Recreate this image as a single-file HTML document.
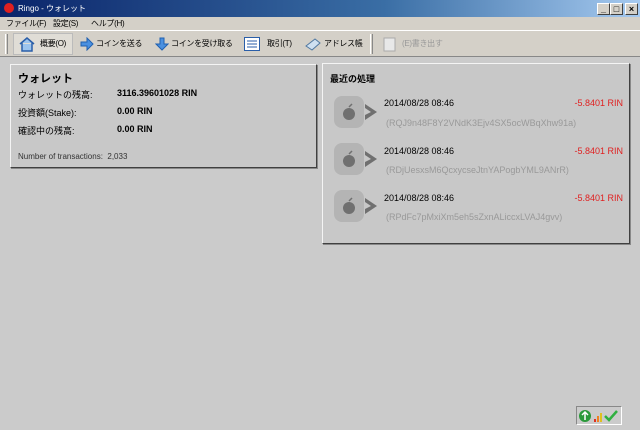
<!DOCTYPE html>
<html><head><meta charset="utf-8"><style>
*{margin:0;padding:0;box-sizing:border-box}
body{width:640px;height:430px;background:#cbcbcb;font-family:"Liberation Sans","Noto Sans CJK JP",sans-serif;font-size:9px;color:#000;position:relative;overflow:hidden}
.abs{position:absolute;white-space:nowrap}
#title{left:0;top:0;width:640px;height:17px;background:linear-gradient(90deg,#0a246a,#3a6ea5 60%,#a6caf0);color:#fff}
#menu{left:0;top:17px;width:640px;height:13px;background:#d4d0c8;font-size:8px;letter-spacing:-0.3px}
#tb{left:0;top:30px;width:640px;height:27px;background:#d4d0c8;border-top:1px solid #fff;border-bottom:1px solid #888;font-size:8px;letter-spacing:-0.3px}
.panel{position:absolute;background:#c8c8c8;border:1px solid;border-color:#f4f4f4 #404040 #404040 #f4f4f4;box-shadow:1px 1px 0 #888}
.wb{position:absolute;top:3px;width:13px;height:12px;background:#d4d0c8;border:1px solid;border-color:#fff #404040 #404040 #fff;font-size:9px;line-height:10px;text-align:center;color:#000;font-weight:bold}
.ico{position:absolute;left:10px;width:46px;height:34px}
.t{position:absolute;top:7px}
</style></head><body>
<div class="abs" id="title">
 <div class="abs" style="left:4px;top:3px;width:10px;height:10px;border-radius:50%;background:#e02020"></div>
 <div class="abs" style="left:18px;top:3px;font-size:8px">Ringo - ウォレット</div>
 <div class="wb" style="left:597px">_</div><div class="wb" style="left:610px">□</div><div class="wb" style="left:625px">×</div>
</div>
<div class="abs" id="menu"><span class="abs" style="left:6px;top:1px">ファイル(F)</span><span class="abs" style="left:53px;top:1px">設定(S)</span><span class="abs" style="left:91px;top:1px">ヘルプ(H)</span></div>
<div class="abs" id="tb">
 <div class="abs" style="left:5px;top:3px;width:3px;height:20px;border-left:1px solid #fff;border-right:1px solid #888"></div>
 <div class="abs" style="left:13px;top:2px;width:60px;height:22px;background:#e0ddd6;border:1px solid #bbb"></div>
 <svg class="abs" style="left:19px;top:5px" width="16" height="16"><path d="M1 8L8 2L15 8M3 7V15H13V7" fill="#9cc4ee" stroke="#2a5ea8" stroke-width="1.5"/></svg><span class="t" style="left:40px">概要(O)</span>
 <svg class="abs" style="left:80px;top:6px" width="14" height="14"><path d="M1 5H7V1L13 7L7 13V9H1Z" fill="#4a90e0" stroke="#2060b0"/></svg><span class="t" style="left:96px">コインを送る</span>
 <svg class="abs" style="left:155px;top:6px" width="14" height="14"><path d="M5 1H9V7H13L7 13L1 7H5Z" fill="#4a90e0" stroke="#2060b0"/></svg><span class="t" style="left:171px">コインを受け取る</span>
 <svg class="abs" style="left:244px;top:6px" width="16" height="14"><rect x="0.5" y="0.5" width="15" height="13" fill="#fff" stroke="#2a5ea8"/><path d="M3 4H13M3 7H13M3 10H13" stroke="#2a5ea8"/></svg><span class="t" style="left:267px">取引(T)</span>
 <svg class="abs" style="left:305px;top:6px" width="16" height="14"><path d="M1 9L10 2L15 6L7 13Z" fill="#cfe0f0" stroke="#5078a0"/></svg><span class="t" style="left:324px">アドレス帳</span>
 <div class="abs" style="left:370px;top:3px;width:3px;height:20px;border-left:1px solid #fff;border-right:1px solid #888"></div>
 <svg class="abs" style="left:383px;top:5px" width="14" height="16"><rect x="1" y="2" width="11" height="13" fill="#e8e8e8" stroke="#aaa"/></svg><span class="t" style="left:402px;color:#999">(E)書き出す</span>
</div>

<div class="panel" style="left:10px;top:64px;width:307px;height:104px">
 <div class="abs" style="left:7px;top:5px;font-size:11px;font-weight:bold">ウォレット</div>
 <div class="abs" style="left:7px;top:23px">ウォレットの残高:</div><div class="abs" style="left:106px;top:23px;font-weight:bold">3116.39601028 RIN</div>
 <div class="abs" style="left:7px;top:41px">投資額(Stake):</div><div class="abs" style="left:106px;top:41px;font-weight:bold">0.00 RIN</div>
 <div class="abs" style="left:7px;top:59px">確認中の残高:</div><div class="abs" style="left:106px;top:59px;font-weight:bold">0.00 RIN</div>
 <div class="abs" style="left:7px;top:87px;font-size:8px;color:#333">Number of transactions:&nbsp;&nbsp;2,033</div>
</div>

<div class="panel" style="left:322px;top:63px;width:308px;height:181px">
 <div class="abs" style="left:7px;top:8px;font-weight:bold">最近の処理</div>
 <svg class="ico" style="top:31px" viewBox="0 0 46 34"><rect x="1" y="1" width="30" height="32" rx="8" fill="#b4b4b4"/><circle cx="16" cy="19" r="6" fill="#707070"/><path d="M16 12l3-3" stroke="#707070" stroke-width="1.5"/><path d="M32 9L44 17L32 25V20L38 17L32 13Z" fill="#707070"/></svg>
 <div class="abs" style="left:61px;top:34px">2014/08/28 08:46</div><div class="abs" style="right:6px;top:34px;color:#e02020">-5.8401 RIN</div>
 <div class="abs" style="left:63px;top:54px;color:#999">(RQJ9n48F8Y2VNdK3Ejv4SX5ocWBqXhw91a)</div>
 <svg class="ico" style="top:78px" viewBox="0 0 46 34"><rect x="1" y="1" width="30" height="32" rx="8" fill="#b4b4b4"/><circle cx="16" cy="19" r="6" fill="#707070"/><path d="M16 12l3-3" stroke="#707070" stroke-width="1.5"/><path d="M32 9L44 17L32 25V20L38 17L32 13Z" fill="#707070"/></svg>
 <div class="abs" style="left:61px;top:82px">2014/08/28 08:46</div><div class="abs" style="right:6px;top:82px;color:#e02020">-5.8401 RIN</div>
 <div class="abs" style="left:63px;top:101px;color:#999">(RDjUesxsM6QcxycseJtnYAPogbYML9ANrR)</div>
 <svg class="ico" style="top:125px" viewBox="0 0 46 34"><rect x="1" y="1" width="30" height="32" rx="8" fill="#b4b4b4"/><circle cx="16" cy="19" r="6" fill="#707070"/><path d="M16 12l3-3" stroke="#707070" stroke-width="1.5"/><path d="M32 9L44 17L32 25V20L38 17L32 13Z" fill="#707070"/></svg>
 <div class="abs" style="left:61px;top:129px">2014/08/28 08:46</div><div class="abs" style="right:6px;top:129px;color:#e02020">-5.8401 RIN</div>
 <div class="abs" style="left:63px;top:148px;color:#999">(RPdFc7pMxiXm5eh5sZxnALiccxLVAJ4gvv)</div>
</div>

<div class="abs" style="left:576px;top:406px;width:46px;height:19px;border:1px solid;border-color:#888 #fff #fff #888">
 <svg width="44" height="17" style="position:absolute;left:0;top:0"><circle cx="8" cy="9" r="6" fill="#2a9a3a"/><path d="M8 13V6M5 8L8 5L11 8" stroke="#fff" stroke-width="1.5" fill="none"/><rect x="17" y="12" width="2" height="3" fill="#e03020"/><rect x="20" y="9" width="2" height="6" fill="#f08020"/><rect x="23" y="6" width="2" height="9" fill="#e0c020"/><path d="M28 9L32 13L40 4" stroke="#30b040" stroke-width="2.5" fill="none"/></svg>
</div>
</body></html>
